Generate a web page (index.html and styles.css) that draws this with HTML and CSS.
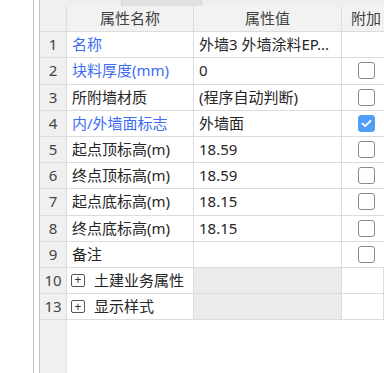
FILE: index.html
```html
<!DOCTYPE html>
<html lang="zh-CN">
<head>
    <meta charset="UTF-8">
    <meta name="viewport" content="width=device-width, initial-scale=1.0">
    <title>属性列表</title>
    <link rel="stylesheet" href="styles.css">
</head>
<body>
    <div class="page">
        <div class="gutter"></div>
        <div class="rule"></div>
        <div class="gap"></div>
        <div class="rule"></div>

        <div class="sheet">
            <div class="tabbar">
                <div class="tab"></div>
                <div class="tab tab-active"></div>
                <div class="tab tab-rest"></div>
            </div>

            <div class="grid">
                <div class="cell head num"></div>
                <div class="cell head center">属性名称</div>
                <div class="cell head center">属性值</div>
                <div class="cell head extra-head">附加</div>

                <div class="cell num">1</div>
                <div class="cell blue">名称</div>
                <div class="cell">外墙3 外墙涂料EP...</div>
                <div class="cell box-cell"></div>

                <div class="cell num">2</div>
                <div class="cell blue">块料厚度(mm)</div>
                <div class="cell">0</div>
                <div class="cell box-cell"><span class="check"></span></div>

                <div class="cell num">3</div>
                <div class="cell">所附墙材质</div>
                <div class="cell">(程序自动判断)</div>
                <div class="cell box-cell"><span class="check"></span></div>

                <div class="cell num">4</div>
                <div class="cell blue">内/外墙面标志</div>
                <div class="cell">外墙面</div>
                <div class="cell box-cell">
                    <span class="check checked">
                        <svg width="11" height="9" viewBox="0 0 11 9"><path d="M1.5 4.6 L4.2 7.2 L9.5 1.8" fill="none" stroke="#fff" stroke-width="1.8" stroke-linecap="round" stroke-linejoin="round"/></svg>
                    </span>
                </div>

                <div class="cell num">5</div>
                <div class="cell">起点顶标高(m)</div>
                <div class="cell">18.59</div>
                <div class="cell box-cell"><span class="check"></span></div>

                <div class="cell num">6</div>
                <div class="cell">终点顶标高(m)</div>
                <div class="cell">18.59</div>
                <div class="cell box-cell"><span class="check"></span></div>

                <div class="cell num">7</div>
                <div class="cell">起点底标高(m)</div>
                <div class="cell">18.15</div>
                <div class="cell box-cell"><span class="check"></span></div>

                <div class="cell num">8</div>
                <div class="cell">终点底标高(m)</div>
                <div class="cell">18.15</div>
                <div class="cell box-cell"><span class="check"></span></div>

                <div class="cell num">9</div>
                <div class="cell">备注</div>
                <div class="cell"></div>
                <div class="cell box-cell"><span class="check"></span></div>

                <div class="cell num">10</div>
                <div class="cell group"><span class="plus">+</span>土建业务属性</div>
                <div class="cell shaded"></div>
                <div class="cell"></div>

                <div class="cell num">13</div>
                <div class="cell group"><span class="plus">+</span>显示样式</div>
                <div class="cell shaded"></div>
                <div class="cell"></div>
            </div>

            <div class="filler">
                <div class="filler-num"></div>
            </div>
        </div>
    </div>
</body>
</html>
```

FILE: styles.css
```css
html, body {
    margin: 0;
    padding: 0;
    height: 100%;
    overflow: hidden;
    background-color: #ffffff;
}
body {
    font-family: "Noto Sans", "Noto Sans CJK SC", sans-serif;
    font-size: 15px;
    color: #262626;
}
.page {
    display: flex;
    height: 373px;
}
.gutter {
    width: 33px;
    flex: none;
}
.rule {
    width: 1px;
    flex: none;
    background-color: #c2c2c2;
}
.gap {
    width: 5px;
    flex: none;
}
.sheet {
    flex: 1;
    display: flex;
    flex-direction: column;
    min-width: 0;
}
.tabbar {
    display: flex;
    height: 6px;
    flex: none;
}
.tab {
    width: 81px;
    background-color: #efefef;
    border-right: 1px solid #d6d6d6;
}
.tab-active {
    width: 79px;
    background-color: #e1e1e1;
}
.tab-rest {
    flex: 1;
    border-right: none;
}
.grid {
    display: grid;
    grid-template-columns: 27px 127px 148px minmax(0, 1fr);
    grid-auto-rows: 26.2px;
    flex: none;
}
.cell {
    box-sizing: border-box;
    border-right: 1px solid #dcdcdc;
    border-bottom: 1px solid #dcdcdc;
    display: flex;
    align-items: center;
    padding-left: 5px;
    white-space: nowrap;
    overflow: hidden;
    line-height: 1;
    min-width: 0;
}
.head {
    background-color: #f2f2f2;
    color: #404040;
}
.center {
    justify-content: center;
    padding-left: 0;
}
.extra-head {
    padding-left: 9px;
    border-right: none;
}
.num {
    background-color: #f0f0f0;
    color: #444444;
    justify-content: center;
    padding-left: 0;
}
.blue {
    color: #3d6cf2;
}
.box-cell {
    padding-left: 16px;
    border-right: none;
}
.check {
    box-sizing: border-box;
    flex: none;
    width: 17px;
    height: 17px;
    border: 1px solid #8a8a8a;
    border-radius: 3px;
    display: flex;
    align-items: center;
    justify-content: center;
}
.checked {
    background-color: #4f9ef8;
    border-color: #4f9ef8;
}
.group {
    padding-left: 4px;
}
.plus {
    box-sizing: border-box;
    flex: none;
    width: 14px;
    height: 13px;
    border: 1px solid #555555;
    border-radius: 2px;
    font-size: 12px;
    display: flex;
    align-items: center;
    justify-content: center;
    margin-right: 9px;
    color: #333333;
}
.shaded {
    background-color: #ebebeb;
}
.filler {
    flex: 1;
    display: flex;
}
.filler-num {
    width: 27px;
    box-sizing: border-box;
    background-color: #f0f0f0;
    border-right: 1px solid #e6e6e6;
}
```
